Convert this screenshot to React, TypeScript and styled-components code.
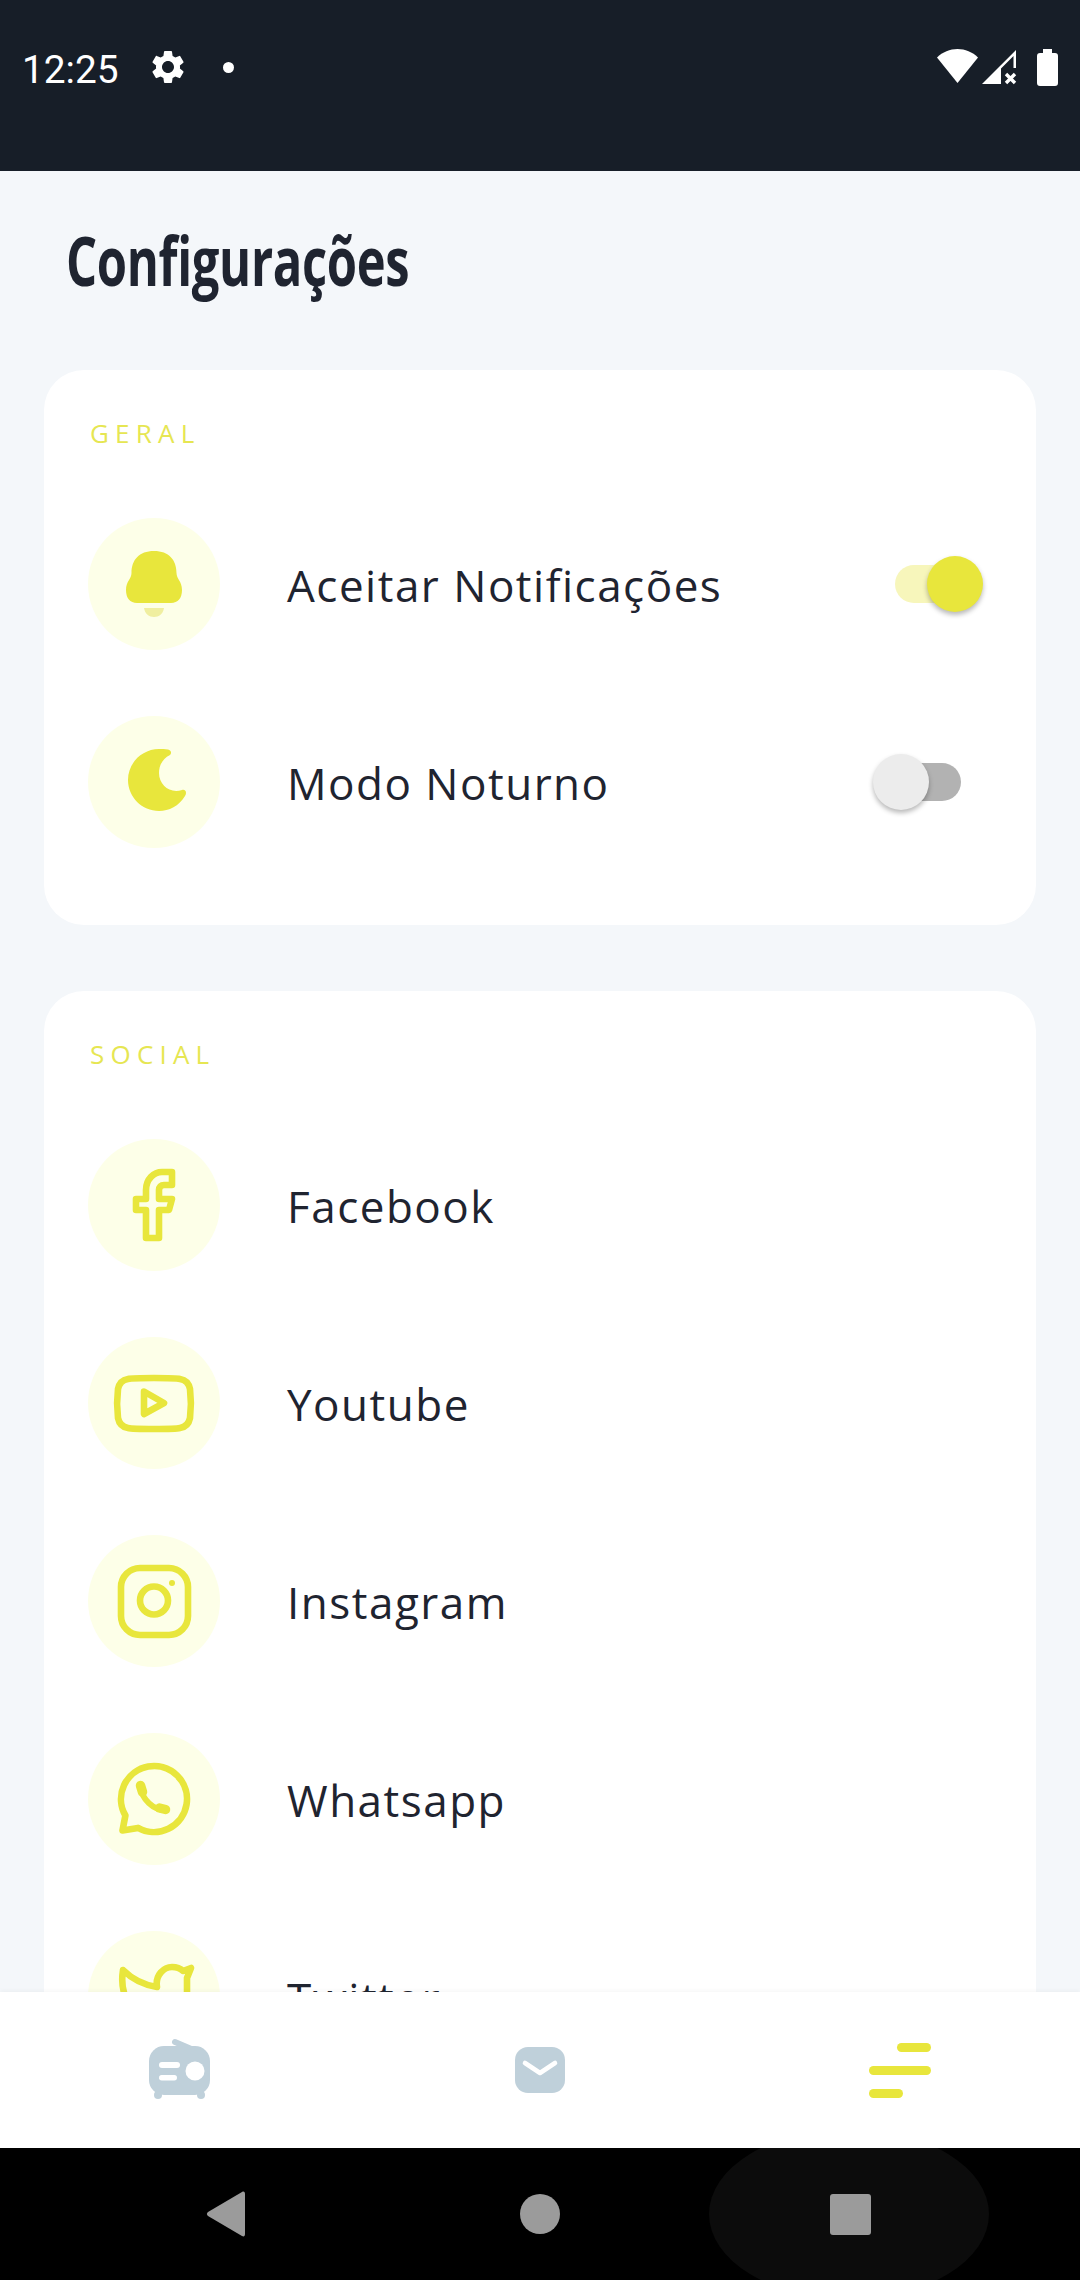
import React from 'react';
import styled, { createGlobalStyle } from 'styled-components';
import { MdSettings } from 'react-icons/md';

const accent = '#e8e63c';
const slate = '#bfd0da';
const ink = '#1f2430';

const GlobalStyle = createGlobalStyle`
  html, body {
    margin: 0;
    padding: 0;
    background: #f4f7fa;
  }
  * {
    box-sizing: border-box;
  }
`;

const Screen = styled.div`
  width: 1080px;
  height: 2280px;
  display: flex;
  flex-direction: column;
  overflow: hidden;
  background: #f4f7fa;
  font-family: 'Open Sans', sans-serif;
`;

const StatusBar = styled.header`
  flex: none;
  height: 171px;
  padding: 47px 22px 0 22px;
  display: flex;
  align-items: flex-start;
  justify-content: space-between;
  background: #171e28;
  color: #ffffff;
`;

const StatusGroup = styled.div`
  display: flex;
  align-items: center;
  height: 40px;
`;

const Clock = styled.span`
  font-family: Roboto, sans-serif;
  font-size: 38.8px;
  line-height: 46px;
  height: 40px;
  width: 126px;
`;

const Dot = styled.span`
  width: 11px;
  height: 11px;
  margin-left: 35px;
  border-radius: 50%;
  background: #ffffff;
`;

const SystemIcons = styled.div`
  display: flex;
  align-items: flex-start;
  gap: 4px;
  height: 40px;
  padding-top: 2px;
`;

const BatterySlot = styled.span`
  margin-left: 16px;
  display: flex;
`;

const Scroller = styled.main`
  flex: 1;
  min-height: 0;
  overflow: hidden;
  padding: 0 44px;
`;

const Title = styled.h1`
  margin: 0;
  height: 199px;
  padding: 51px 0 0 22px;
  font-family: 'Open Sans', sans-serif;
  font-size: 68px;
  line-height: 76px;
  font-weight: 700;
  letter-spacing: -0.5px;
  color: ${ink};
  white-space: nowrap;
  transform: scaleX(0.72);
  transform-origin: 22px 0;
`;

const Card = styled.section`
  background: #ffffff;
  border-radius: 40px;
  padding: 46px 44px 77px;
  margin-bottom: 66px;
`;

const SectionLabel = styled.h2`
  margin: 0 0 68px 2px;
  font-size: 26px;
  line-height: 34px;
  font-weight: 400;
  letter-spacing: 6.2px;
  color: #e6e652;
`;

const List = styled.div`
  display: flex;
  flex-direction: column;
  gap: 66px;
`;

const Row = styled.div`
  display: flex;
  align-items: center;
  height: 132px;
`;

const IconCircle = styled.div`
  flex: none;
  width: 132px;
  height: 132px;
  border-radius: 50%;
  background: #fdffe8;
  display: flex;
  align-items: center;
  justify-content: center;
`;

const RowText = styled.span`
  margin-left: 67px;
  padding-top: 1px;
  font-size: 44px;
  line-height: 60px;
  letter-spacing: 1.5px;
  color: ${ink};
`;

const Track = styled.div<{ $on?: boolean }>`
  position: relative;
  flex: none;
  width: 66px;
  height: 38px;
  margin: 0 31px 0 auto;
  border-radius: 19px;
  background: ${(p) => (p.$on ? '#f7f6bb' : '#b2b2b2')};
`;

const Thumb = styled.span<{ $on?: boolean }>`
  position: absolute;
  top: -9px;
  left: ${(p) => (p.$on ? '32px' : '-22px')};
  width: 56px;
  height: 56px;
  border-radius: 50%;
  background: ${(p) => (p.$on ? accent : '#ececec')};
  box-shadow: 0 3px 5px rgba(0, 0, 0, 0.28);
`;

const TabBar = styled.nav`
  position: relative;
  flex: none;
  height: 156px;
  display: grid;
  grid-template-columns: repeat(3, 1fr);
  align-items: center;
  background: #ffffff;
  box-shadow: 0 -2px 4px rgba(0, 0, 0, 0.03);
`;

const Tab = styled.div`
  display: flex;
  justify-content: center;
  align-items: center;
`;

const NavBar = styled.footer`
  flex: none;
  height: 132px;
  padding-left: 196px;
  display: flex;
  align-items: center;
  gap: 254px;
  overflow: hidden;
  background: #000000;
`;

const NavButton = styled.div`
  position: relative;
  flex: none;
  width: 60px;
  height: 60px;
  display: flex;
  align-items: center;
  justify-content: center;

  &:last-child {
    margin-left: -4px;
  }
`;

const Ripple = styled.span`
  position: absolute;
  left: -111px;
  top: -55px;
  width: 280px;
  height: 170px;
  border-radius: 50%;
  background: #0c0c0c;
`;

const HomeDot = styled.span`
  width: 40px;
  height: 40px;
  border-radius: 50%;
  background: #9b9b9b;
`;

const RecentSquare = styled.span`
  position: relative;
  width: 41px;
  height: 41px;
  border-radius: 3px;
  background: #9b9b9b;
`;

const Glyph: React.FC<{ children: React.ReactNode }> = ({ children }) => (
  <svg width="84" height="84" viewBox="-6 -6 84 84" fill="none" stroke={accent} strokeWidth="6.6" strokeLinejoin="round" strokeLinecap="round">
    {children}
  </svg>
);

const BellIcon = () => (
  <Glyph>
    <path stroke="none" fill={accent} d="M36 3C51 3 58.5 12 58.5 25C58.5 31 64 33 64 42C64 50 60 55 53 55H19C12 55 8 50 8 42C8 33 13.5 31 13.5 25C13.5 12 21 3 36 3Z" />
    <path stroke="none" fill="#f0efa0" d="M26 60H46C45 66 41 69 36 69C31 69 27 66 26 60Z" />
  </Glyph>
);

const MoonIcon = () => (
  <Glyph>
    <path stroke="none" fill={accent} d="M50 3.5C53 4 54 7 52 9C44 13 41 20 41 27C41 39 52 48 64 44C68 43 69 47 67 50C61 60 51 65 41 65C24 65 10 51 10 34C10 17 24 3 41 3C44 3 47 3 50 3.5Z" />
  </Glyph>
);

const FacebookIcon = () => (
  <Glyph>
    <path d="M54 3V16H46C43 16 41 18 41 21V30H54L51 41H41V69H28V41H18V30H28V21C28 10 36 3 44 3Z" />
  </Glyph>
);

const YoutubeIcon = () => (
  <Glyph>
    <path d="M36 11C50 11 58 11 62 12C68 13 71 17 72 22C73 30 73 43 72 51C71 56 68 60 62 61C58 62 50 62 36 62C22 62 14 62 10 61C4 60 1 56 0 51C-1 43 -1 30 0 22C1 17 4 13 10 12C14 11 22 11 36 11Z" />
    <path d="M26 24.5L46 36L26 47Z" />
  </Glyph>
);

const InstagramIcon = () => (
  <Glyph>
    <rect x="3" y="3" width="67" height="67" rx="19" />
    <circle cx="36" cy="35.5" r="14" />
    <circle cx="54" cy="18" r="3" fill={accent} stroke="none" />
  </Glyph>
);

const WhatsappIcon = () => (
  <Glyph>
    <path d="M4.5 67.5L7.4 52.5A33 33 0 1 1 20 64.9Z" />
    <path strokeWidth="6" d="M23 25C24 36 35 47 47 47" />
    <path strokeWidth="9.5" d="M22.5 22.5L24.5 29M41.5 45L47.5 46.5" />
  </Glyph>
);

const TwitterIcon = () => (
  <Glyph>
    <path d="M5 9C14 18 26 24 39 26C37 14 46 6 54 6C59 6 63 8 65 10L73 7L69 17V32C68 50 52 68 28 68C18 68 10 65 3 60C12 60 18 58 24 54C8 46 2 28 5 9Z" />
  </Glyph>
);

const WifiIcon = () => (
  <svg width="41" height="34" viewBox="0 0 41 34" fill="#ffffff">
    <path d="M0 8.5C5.5 3 13 0 20.5 0C28 0 35.5 3 41 8.5L20.5 34Z" />
  </svg>
);

const SignalIcon = () => (
  <svg width="35" height="36" viewBox="0 0 35 36" fill="#ffffff">
    <path d="M0 35L19 16V35Z" />
    <path d="M19 16L34 1V19H31.5V7L19 19.5Z" />
    <path stroke="#ffffff" strokeWidth="3.4" d="M24 25L33 34M33 25L24 34" />
  </svg>
);

const BatteryIcon = () => (
  <svg width="21" height="37" viewBox="0 0 21 37" fill="#ffffff">
    <path d="M6 0H15V4H18C20 4 21 5 21 7V34C21 36 20 37 18 37H3C1 37 0 36 0 34V7C0 5 1 4 3 4H6Z" />
  </svg>
);

const RadioIcon = () => (
  <svg width="72" height="64" viewBox="0 0 72 64" fill={slate}>
    <path stroke={slate} strokeWidth="6" strokeLinecap="round" d="M31 4L52 13" />
    <rect x="5" y="8" width="61" height="49" rx="15" />
    <circle cx="14" cy="57" r="4" />
    <circle cx="57" cy="57" r="4" />
    <rect x="15" y="24" width="21" height="6" rx="3" fill="#ffffff" />
    <rect x="15" y="37" width="18" height="5.5" rx="2.7" fill="#ffffff" />
    <circle cx="51" cy="33" r="9.5" fill="#ffffff" />
  </svg>
);

const MailIcon = () => (
  <svg width="50" height="46" viewBox="0 0 50 46" fill="none">
    <rect width="50" height="46" rx="13" fill={slate} />
    <path stroke="#ffffff" strokeWidth="4.6" strokeLinecap="round" strokeLinejoin="round" d="M10 16L25 26L40 16" />
  </svg>
);

const MenuIcon = () => (
  <svg width="62" height="55" viewBox="0 0 62 55" fill={accent}>
    <rect x="28" width="34" height="9" rx="4.5" />
    <rect y="23" width="62" height="9" rx="4.5" />
    <rect y="46" width="34" height="9" rx="4.5" />
  </svg>
);

const BackIcon = () => (
  <svg width="40" height="46" viewBox="0 0 40 46" fill="#9b9b9b">
    <path d="M36 1C38 0 39 1 39 3V43C39 45 38 46 36 45L2 25C0.5 24 0.5 22 2 21Z" />
  </svg>
);

const socials = [
  { name: 'Facebook', icon: <FacebookIcon /> },
  { name: 'Youtube', icon: <YoutubeIcon /> },
  { name: 'Instagram', icon: <InstagramIcon /> },
  { name: 'Whatsapp', icon: <WhatsappIcon /> },
  { name: 'Twitter', icon: <TwitterIcon /> },
];

export default function App() {
  return (
    <Screen>
      <GlobalStyle />
      <StatusBar>
        <StatusGroup>
          <Clock>12:25</Clock>
          <MdSettings size={40} />
          <Dot />
        </StatusGroup>
        <SystemIcons>
          <WifiIcon />
          <SignalIcon />
          <BatterySlot><BatteryIcon /></BatterySlot>
        </SystemIcons>
      </StatusBar>

      <Scroller>
        <Title>Configurações</Title>

        <Card>
          <SectionLabel>GERAL</SectionLabel>
          <List>
            <Row>
              <IconCircle><BellIcon /></IconCircle>
              <RowText>Aceitar Notificações</RowText>
              <Track $on><Thumb $on /></Track>
            </Row>
            <Row>
              <IconCircle><MoonIcon /></IconCircle>
              <RowText>Modo Noturno</RowText>
              <Track><Thumb /></Track>
            </Row>
          </List>
        </Card>

        <Card>
          <SectionLabel>SOCIAL</SectionLabel>
          <List>
            {socials.map((s) => (
              <Row key={s.name}>
                <IconCircle>{s.icon}</IconCircle>
                <RowText>{s.name}</RowText>
              </Row>
            ))}
          </List>
        </Card>
      </Scroller>

      <TabBar>
        <Tab><RadioIcon /></Tab>
        <Tab><MailIcon /></Tab>
        <Tab><MenuIcon /></Tab>
      </TabBar>

      <NavBar>
        <NavButton><BackIcon /></NavButton>
        <NavButton><HomeDot /></NavButton>
        <NavButton>
          <Ripple />
          <RecentSquare />
        </NavButton>
      </NavBar>
    </Screen>
  );
}
